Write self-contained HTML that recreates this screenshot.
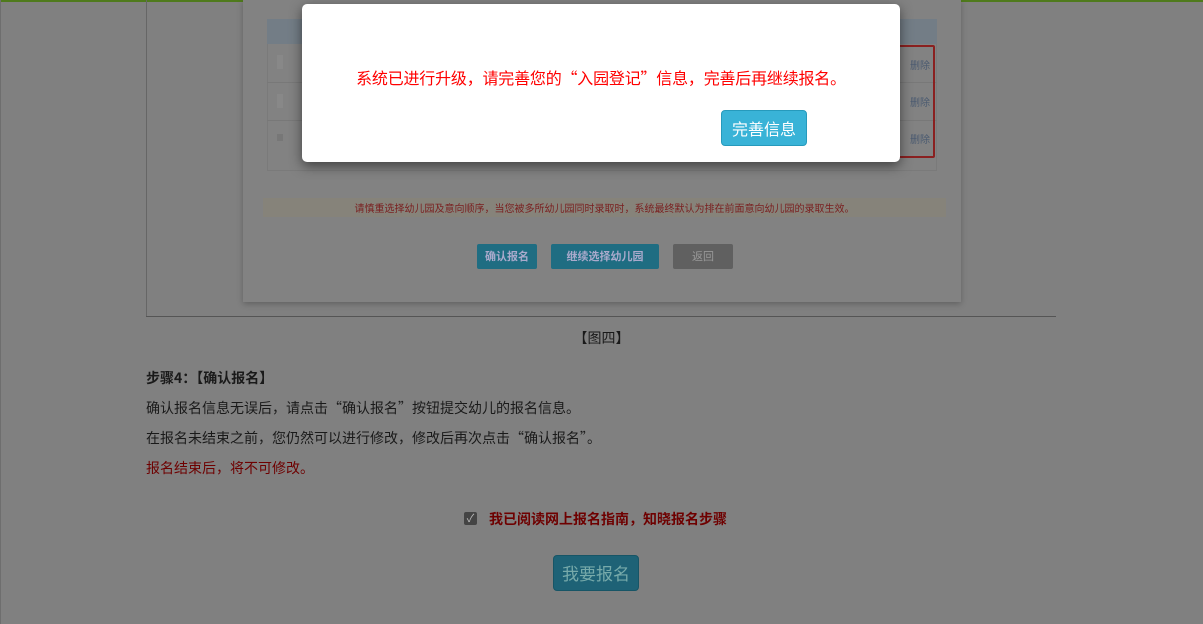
<!DOCTYPE html>
<html><head><meta charset="utf-8"><style>
*{margin:0;padding:0;box-sizing:border-box}
body{width:1203px;height:624px;overflow:hidden;background:#808080;position:relative;font-family:"Noto Sans CJK SC","Liberation Sans",sans-serif;font-size:14px;color:#1a1a1a}
.a{position:absolute;white-space:nowrap}
</style></head><body>
<div class="a" style="left:0;top:0;width:1203px;height:2px;background:#4f7a1c"></div>
<div class="a" style="left:0;top:0;width:1px;height:624px;background:#6e6e6e"></div>
<div class="a" style="left:146px;top:0;width:1px;height:317px;background:#666"></div>
<div class="a" style="left:146px;top:316px;width:910px;height:1px;background:#555"></div>
<div class="a" style="left:243px;top:0;width:718px;height:302px;background:#828282;box-shadow:0 2px 6px rgba(0,0,0,.25)"></div>
<div class="a" style="left:267px;top:19px;width:670px;height:25px;background:#737d86"></div>
<div class="a" style="left:267px;top:44px;width:670px;height:127px;border:1px solid #7a7a7a;border-top:0"></div>
<div class="a" style="left:267px;top:82px;width:670px;height:1px;background:#787878"></div>
<div class="a" style="left:267px;top:120px;width:670px;height:1px;background:#787878"></div>
<div class="a" style="left:898px;top:45px;width:37px;height:113px;border:2px solid #8a2020;border-radius:2px"></div>
<div class="a" style="left:910px;top:57px;font-size:10px;color:#4a5a70">删除</div>
<div class="a" style="left:910px;top:94px;font-size:10px;color:#4a5a70">删除</div>
<div class="a" style="left:910px;top:131px;font-size:10px;color:#4a5a70">删除</div>
<div class="a" style="left:277px;top:55px;width:6px;height:14px;background:#888"></div>
<div class="a" style="left:277px;top:94px;width:6px;height:14px;background:#888"></div>
<div class="a" style="left:277px;top:134px;width:6px;height:7px;background:#777"></div>
<div class="a" style="left:263px;top:198px;width:683px;height:19px;background:#86837a;color:#7a2020;font-size:10px;text-align:center;line-height:19px">请慎重选择幼儿园及意向顺序，当您被多所幼儿园同时录取时，系统最终默认为排在前面意向幼儿园的录取生效。</div>
<div class="a" style="left:477px;top:244px;width:60px;height:25px;background:#1f6d82;border-radius:2px;color:#aac;font-size:11px;text-align:center;line-height:25px;font-weight:bold">确认报名</div>
<div class="a" style="left:551px;top:244px;width:108px;height:25px;background:#1f6d82;border-radius:2px;color:#aac;font-size:11px;text-align:center;line-height:25px;font-weight:bold">继续选择幼儿园</div>
<div class="a" style="left:673px;top:244px;width:60px;height:25px;background:#606060;border-radius:2px;color:#999;font-size:11px;text-align:center;line-height:25px">返回</div>

<div class="a" style="left:0;top:328px;width:1203px;text-align:center">【图四】</div>
<div class="a" style="left:146px;top:368px;font-weight:bold">步骤4：【确认报名】</div>
<div class="a" style="left:146px;top:398px">确认报名信息无误后，请点击“确认报名”按钮提交幼儿的报名信息。</div>
<div class="a" style="left:146px;top:428px">在报名未结束之前，您仍然可以进行修改，修改后再次点击“确认报名”。</div>
<div class="a" style="left:146px;top:458px;color:#6e0000">报名结束后，将不可修改。</div>
<div class="a" style="left:464px;top:512px;width:13px;height:13px;background:#444;border-radius:2px;color:#bbb;font-size:11px;line-height:13px;text-align:center">✓</div>
<div class="a" style="left:489px;top:509px;color:#6e0000;font-weight:bold">我已阅读网上报名指南，知晓报名步骤</div>
<div class="a" style="left:553px;top:555px;width:86px;height:36px;background:#1e6276;border:1px solid #175566;border-radius:4px;color:#7aa;font-size:17px;text-align:center;line-height:34px">我要报名</div>

<div class="a" style="left:302px;top:4px;width:598px;height:158px;background:#fff;border-radius:5px;box-shadow:0 4px 12px rgba(0,0,0,.5)"></div>
<div class="a" style="left:302px;top:65px;width:598px;text-align:center;color:#f00;font-size:16px;letter-spacing:-0.2px">系统已进行升级，请完善您的“入园登记”信息，完善后再继续报名。</div>
<div class="a" style="left:721px;top:110px;width:86px;height:36px;background:#39b3d7;border:1px solid #269abc;border-radius:4px;color:#fff;font-size:16px;text-align:center;line-height:34px">完善信息</div>
</body></html>
